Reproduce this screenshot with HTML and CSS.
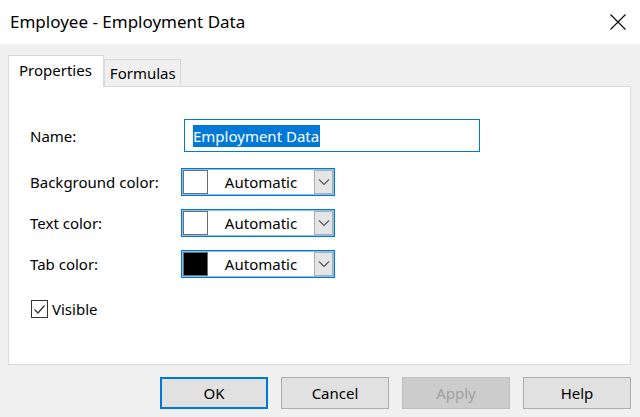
FILE: index.html
```html
<!DOCTYPE html>
<html>
<head>
<meta charset="utf-8">
<link rel="stylesheet" href="styles.css">
</head>
<body>
<div class="dialog">
  <div class="titlebar">
    <div class="title">Employee - Employment Data</div>
    <svg class="close" width="16" height="16" viewBox="0 0 16 16"><path d="M0.5 0.5 L15.5 15.5 M15.5 0.5 L0.5 15.5" stroke="#000" stroke-width="1.1" fill="none"/></svg>
  </div>
  <div class="body">
    <div class="tabs">
      <div class="tab active">Properties</div>
      <div class="tab">Formulas</div>
    </div>
    <div class="panel">
      <div class="row name-row">
        <div class="label">Name:</div>
        <div class="textbox"><span class="sel">Employment Data</span></div>
      </div>
      <div class="row combo-row first">
        <div class="label">Background color:</div>
        <div class="combo">
          <div class="swatch"></div>
          <div class="combo-text">Automatic</div>
          <div class="drop"><svg width="12" height="8" viewBox="0 0 12 8"><path d="M1 1.5 L6 6.5 L11 1.5" stroke="#555" stroke-width="1.1" fill="none"/></svg></div>
        </div>
      </div>
      <div class="row combo-row">
        <div class="label">Text color:</div>
        <div class="combo">
          <div class="swatch"></div>
          <div class="combo-text">Automatic</div>
          <div class="drop"><svg width="12" height="8" viewBox="0 0 12 8"><path d="M1 1.5 L6 6.5 L11 1.5" stroke="#555" stroke-width="1.1" fill="none"/></svg></div>
        </div>
      </div>
      <div class="row combo-row">
        <div class="label">Tab color:</div>
        <div class="combo">
          <div class="swatch black"></div>
          <div class="combo-text">Automatic</div>
          <div class="drop"><svg width="12" height="8" viewBox="0 0 12 8"><path d="M1 1.5 L6 6.5 L11 1.5" stroke="#555" stroke-width="1.1" fill="none"/></svg></div>
        </div>
      </div>
      <div class="row check-row">
        <div class="checkbox"><svg width="15" height="15" viewBox="0 0 15 15"><path d="M2.5 7.5 L6 11 L12.5 3.5" stroke="#333" stroke-width="1.3" fill="none"/></svg></div>
        <div class="check-label">Visible</div>
      </div>
    </div>
    <div class="buttons">
      <div class="btn default">OK</div>
      <div class="btn">Cancel</div>
      <div class="btn disabled">Apply</div>
      <div class="btn">Help</div>
    </div>
  </div>
</div>
</body>
</html>
```
FILE: styles.css
```css
html, body {
  margin: 0;
  padding: 0;
}
body {
  width: 640px;
  height: 417px;
  background: #f0f0f0;
  font-family: "Noto Sans", "Open Sans", sans-serif;
  font-size: 15px;
  color: #000;
  overflow: hidden;
}
.dialog {
  width: 640px;
  height: 417px;
  display: flex;
  flex-direction: column;
}
.titlebar {
  height: 44px;
  background: #fff;
  display: flex;
  align-items: center;
  justify-content: space-between;
  padding: 0 14px 0 10px;
  flex-shrink: 0;
}
.title {
  font-size: 17px;
  margin-top: -1px;
}
.close {
  margin-top: -1px;
}
.body {
  padding: 11px 9px 0 8px;
  display: flex;
  flex-direction: column;
}
.tabs {
  display: flex;
  align-items: flex-end;
  height: 31px;
  position: relative;
  z-index: 1;
}
.tab {
  box-sizing: border-box;
  height: 27px;
  padding: 0 4px 0 5px;
  border: 1px solid #d9d9d9;
  border-bottom: none;
  background: #f0f0f0;
  display: flex;
  align-items: center;
  font-size: 15px;
}
.tab.active {
  height: 32px;
  margin-bottom: -1px;
  background: #fff;
  padding: 0 11px 0 10px;
  padding-bottom: 4px;
}
.panel {
  box-sizing: border-box;
  height: 279px;
  background: #fff;
  border: 1px solid #d9d9d9;
  padding: 32px 0 0 21px;
  display: flex;
  flex-direction: column;
}
.row {
  display: flex;
  align-items: center;
}
.label {
  width: 151px;
  flex-shrink: 0;
}
.name-row .label {
  width: 154px;
}
.textbox {
  box-sizing: border-box;
  width: 296px;
  height: 33px;
  border: 1px solid #0078d7;
  background: #fff;
  display: flex;
  align-items: center;
  padding-left: 8px;
}
.sel {
  background: #0078d7;
  color: #fff;
  line-height: 22px;
  padding-right: 1px;
}
.combo-row {
  margin-top: 13px;
}
.combo-row.first {
  margin-top: 16px;
}
.combo {
  box-sizing: border-box;
  width: 154px;
  height: 28px;
  border: 1px solid #0078d7;
  box-shadow: inset 0 0 0 1px #8cc1ec;
  background: #fff;
  display: flex;
  align-items: center;
  padding: 1px;
}
.swatch {
  box-sizing: border-box;
  width: 25px;
  height: 24px;
  border: 1px solid #6d6d6d;
  background: #fff;
  flex-shrink: 0;
}
.swatch.black {
  background: #000;
}
.combo-text {
  flex: 1;
  text-align: center;
}
.drop {
  box-sizing: border-box;
  width: 19px;
  height: 24px;
  background: #e5e5e5;
  border: 1px solid #adadad;
  display: flex;
  align-items: center;
  justify-content: center;
}
.check-row {
  margin-top: 21px;
  margin-left: 1px;
}
.checkbox {
  box-sizing: border-box;
  width: 17px;
  height: 18px;
  border: 1px solid #333;
  display: flex;
  align-items: center;
  justify-content: center;
}
.check-label {
  margin-left: 4px;
}
.buttons {
  display: flex;
  justify-content: flex-end;
  gap: 13px;
  margin-top: 12px;
}
.btn {
  box-sizing: border-box;
  width: 108px;
  height: 32px;
  background: #e1e1e1;
  border: 1px solid #adadad;
  display: flex;
  align-items: center;
  justify-content: center;
  font-size: 15px;
}
.btn.default {
  border: 2px solid #0078d7;
}
.btn.disabled {
  background: #cccccc;
  border-color: #bfbfbf;
  color: #a0a0a0;
}
```
